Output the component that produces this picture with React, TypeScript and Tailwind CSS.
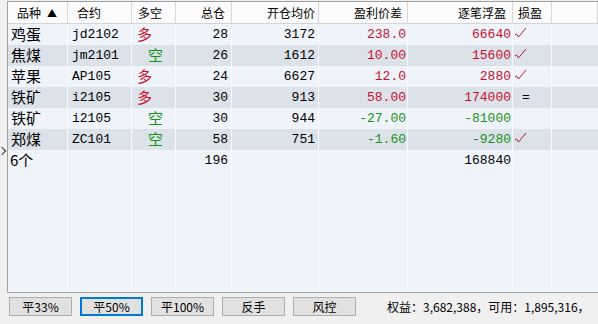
import React from "react";

const RED = "text-[#c8102e]";
const GREEN = "text-[#1a8f1a]";

type Row = {
  name: string;
  code: string;
  side: "多" | "空";
  total: string;
  open: string;
  diff: string;
  pnl: string;
  mark: "check" | "eq" | "";
};

const rows: Row[] = [
  { name: "鸡蛋", code: "jd2102", side: "多", total: "28", open: "3172", diff: "238.0", pnl: "66640", mark: "check" },
  { name: "焦煤", code: "jm2101", side: "空", total: "26", open: "1612", diff: "10.00", pnl: "15600", mark: "check" },
  { name: "苹果", code: "AP105", side: "多", total: "24", open: "6627", diff: "12.0", pnl: "2880", mark: "check" },
  { name: "铁矿", code: "i2105", side: "多", total: "30", open: "913", diff: "58.00", pnl: "174000", mark: "eq" },
  { name: "铁矿", code: "i2105", side: "空", total: "30", open: "944", diff: "-27.00", pnl: "-81000", mark: "" },
  { name: "郑煤", code: "ZC101", side: "空", total: "58", open: "751", diff: "-1.60", pnl: "-9280", mark: "check" },
];

const widths = ["w-[60px]", "w-[64px]", "w-[44px]", "w-[56px]", "w-[87px]", "w-[89px]", "w-[105px]", "w-[39px]"];

const cjk = "font-['Noto_Sans_CJK_SC',sans-serif]";
const mono = "font-['Liberation_Mono','Noto_Sans_CJK_SC',monospace]";

function Check() {
  return (
    <svg width="13" height="12" viewBox="0 0 13 12" className="mb-[3px]">
      <polyline points="1,8 2.5,7 4.5,10 12,1" fill="none" stroke="#c8102e" strokeWidth="1" />
    </svg>
  );
}

function Cell({ i, className = "", children }: { i: number; className?: string; children?: React.ReactNode }) {
  return (
    <div className={`${widths[i]} flex h-full shrink-0 items-center border-r border-[#f8fafd] ${className}`}>
      {children}
    </div>
  );
}

function BodyRow({ dark, children }: { dark?: boolean; children: React.ReactNode }) {
  return (
    <div className={`flex h-[21px] shrink-0 ${dark ? "bg-[#dce2ea]" : "bg-[#eff4fb]"}`}>
      {children}
      <div className="h-full flex-1" />
    </div>
  );
}

export default function App() {
  const headers: { t: React.ReactNode; c: string }[] = [
    { t: <>品种<span className="ml-[6px] text-[10px]">▲</span></>, c: "pl-[9px]" },
    { t: "合约", c: "pl-[9px]" },
    { t: "多空", c: "pl-[6px]" },
    { t: "总仓", c: "justify-end pr-[6px]" },
    { t: "开仓均价", c: "justify-end pr-[3px]" },
    { t: "盈利价差", c: "justify-end pr-[5px]" },
    { t: "逐笔浮盈", c: "justify-end pr-[6px]" },
    { t: "损盈", c: "pl-[5px]" },
  ];

  return (
    <div className={`flex h-[324px] w-[598px] flex-col overflow-hidden bg-[#f0f0f0] text-black ${cjk}`}>
      {/* grid area */}
      <div className="flex h-[293px] pt-[1px]">
        <div className="flex w-[7px] shrink-0 flex-col items-start">
          <div className="ml-[-1px] mt-[147px] h-[6px] w-[6px] rotate-45 border-r-[1.5px] border-t-[1.5px] border-[#333]" />
        </div>
        <div className="flex min-w-0 flex-1 flex-col overflow-hidden border-l border-t border-b border-[#a0a0a0] bg-[#eff4fb]">
          {/* header */}
          <div className="flex h-[22px] shrink-0 border-b border-[#d4d4d4] bg-[#fbfbfb] text-[12px]">
            {headers.map((h, i) => (
              <div key={i} className={`${widths[i]} flex h-full shrink-0 items-center border-r border-[#d8d8d8] ${h.c}`}>
                {h.t}
              </div>
            ))}
            <div className="h-full flex-1 border-r border-[#d8d8d8]" />
          </div>

          {/* rows */}
          <div className={`flex flex-1 flex-col overflow-hidden text-[13px] ${mono}`}>
            {rows.map((r, idx) => {
              const neg = r.diff.startsWith("-");
              const col = neg ? GREEN : RED;
              return (
                <BodyRow key={idx} dark={idx % 2 === 1}>
                  <Cell i={0} className={`pl-[3px] text-[15px] ${cjk}`}>{r.name}</Cell>
                  <Cell i={1} className="pl-[4px]">{r.code}</Cell>
                  <Cell
                    i={2}
                    className={`text-[15px] ${cjk} ${r.side === "多" ? `pl-[5px] ${RED}` : `pl-[16px] ${GREEN}`}`}
                  >
                    {r.side}
                  </Cell>
                  <Cell i={3} className="justify-end pr-[3px]">{r.total}</Cell>
                  <Cell i={4} className="justify-end pr-[3px]">{r.open}</Cell>
                  <Cell i={5} className={`justify-end pr-[1px] ${col}`}>{r.diff}</Cell>
                  <Cell i={6} className={`justify-end pr-[1px] ${col}`}>{r.pnl}</Cell>
                  <Cell i={7} className="pl-[1px]">
                    {r.mark === "check" && <Check />}
                    {r.mark === "eq" && <span className="pl-[8px]">=</span>}
                  </Cell>
                </BodyRow>
              );
            })}
            <BodyRow>
              <Cell i={0} className={`pl-[2px] text-[15px] ${cjk}`}>6个</Cell>
              <Cell i={1} />
              <Cell i={2} />
              <Cell i={3} className="justify-end pr-[3px]">196</Cell>
              <Cell i={4} />
              <Cell i={5} />
              <Cell i={6} className="justify-end pr-[1px]">168840</Cell>
              <Cell i={7} />
            </BodyRow>
            {Array.from({ length: 6 }).map((_, k) => (
              <BodyRow key={`f${k}`}>
                {widths.map((_, i) => (
                  <Cell key={i} i={i} />
                ))}
              </BodyRow>
            ))}
          </div>
        </div>
      </div>

      {/* bottom bar */}
      <div className="flex flex-1 items-start pt-[4px] text-[12px]">
        <div className="ml-[9px] flex gap-[8px]">
          {["平33%", "平50%", "平100%", "反手", "风控"].map((b) => (
            <button
              key={b}
              type="button"
              className={`flex h-[19px] w-[63px] items-center justify-center bg-[#e1e1e1] leading-none ${
                b === "平50%" ? "border-2 border-[#0078d7]" : "border border-[#adadad]"
              }`}
            >
              {b}
            </button>
          ))}
        </div>
        <div className="ml-[31px] flex h-[19px] items-center whitespace-nowrap">
          权益：3,682,388，可用：1,895,316，
        </div>
      </div>
    </div>
  );
}
